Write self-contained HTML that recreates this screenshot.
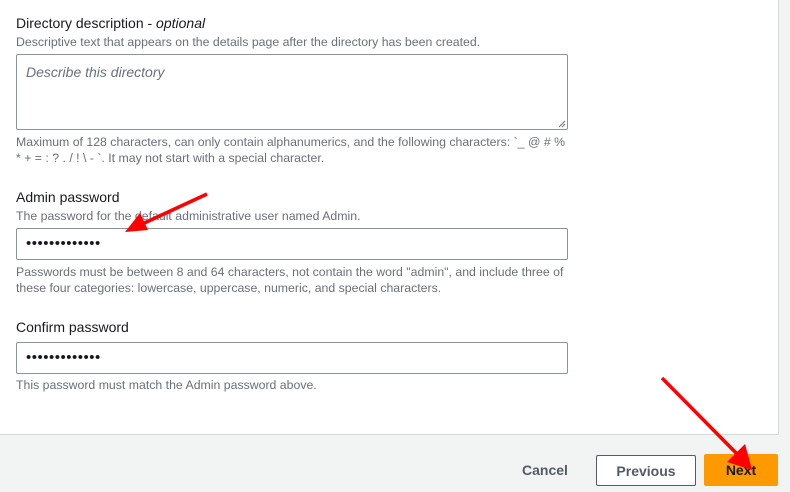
<!DOCTYPE html>
<html><head><meta charset="utf-8"><style>
body{margin:0;width:790px;height:492px;background:#f2f3f3;position:relative;overflow:hidden;font-family:"Liberation Sans",sans-serif;}
.panel{position:absolute;left:0;top:0;width:778px;height:434px;background:#fff;border-right:1px solid #d5dbdb;border-bottom:1px solid #d5dbdb;}
.t{position:absolute;left:16px;white-space:nowrap;}
.lbl{font-size:14px;color:#16191f;}
.d{font-size:12.3px;color:#687078;}
.box{position:absolute;left:16px;width:550px;border:1px solid #879596;border-radius:2px;background:#fff;}
.dots{position:absolute;left:9px;top:6px;font-size:15px;letter-spacing:0.5px;color:#16191f;}
.btn{position:absolute;font-weight:bold;font-size:14px;text-align:center;box-sizing:border-box;}
</style></head><body>
<div class="panel"></div>
<div class="t lbl" style="top:15px">Directory description - <i>optional</i></div>
<div class="t d" style="top:35px">Descriptive text that appears on the details page after the directory has been created.</div>
<div class="box" style="top:54px;height:74px"><span style="position:absolute;left:9px;top:9px;font-size:14px;font-style:italic;color:#687078">Describe this directory</span>
<svg style="position:absolute;right:1px;bottom:1px" width="8" height="8"><path d="M1 7L7 1M4 7L7 4" stroke="#687078"/></svg></div>
<div class="t d" style="top:135px">Maximum of 128 characters, can only contain alphanumerics, and the following characters: `_ @ # %</div>
<div class="t d" style="top:151px">* + = : ? . / ! \ - `. It may not start with a special character.</div>
<div class="t lbl" style="top:189px">Admin password</div>
<div class="t d" style="top:209px">The password for the default administrative user named Admin.</div>
<div class="box" style="top:228px;height:30px"><span class="dots">•••••••••••••</span></div>
<div class="t d" style="top:265px">Passwords must be between 8 and 64 characters, not contain the word "admin", and include three of</div>
<div class="t d" style="top:281px">these four categories: lowercase, uppercase, numeric, and special characters.</div>
<div class="t lbl" style="top:319px">Confirm password</div>
<div class="box" style="top:342px;height:30px"><span class="dots">•••••••••••••</span></div>
<div class="t d" style="top:378px">This password must match the Admin password above.</div>
<div class="btn" style="left:515px;top:462px;width:60px;color:#545b64">Cancel</div>
<div class="btn" style="left:596px;top:455px;width:100px;height:31px;border:1px solid #545b64;border-radius:2px;background:#fff;color:#545b64;padding-top:7px">Previous</div>
<div class="btn" style="left:704px;top:454px;width:74px;height:32px;background:#ff9900;border-radius:2px;color:#16191f;padding-top:8px">Next</div>
<svg style="position:absolute;left:0;top:0" width="790" height="492">
<line x1="207" y1="194" x2="140" y2="225" stroke="#f00" stroke-width="3.5"/>
<polygon points="125,232 140,213 148,230" fill="#f00"/>
<line x1="662" y1="378" x2="740" y2="457" stroke="#f00" stroke-width="3.5"/>
<polygon points="752,470 727,462 745,444" fill="#f00"/>
</svg>
</body></html>
